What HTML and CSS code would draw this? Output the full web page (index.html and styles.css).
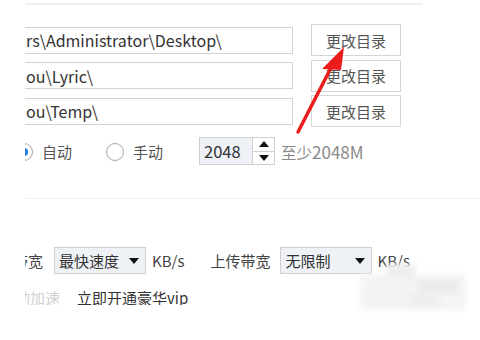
FILE: index.html
```html
<!DOCTYPE html>
<html lang="zh-CN">
<head>
<meta charset="utf-8">
<link rel="stylesheet" href="styles.css">
</head>
<body>
<div class="page">
  <div class="clip">
    <div class="topline"></div>
    <div class="paths">
      <div class="path-input"><span>rs\Administrator\Desktop\</span></div>
      <div class="btn">更改目录</div>
      <div class="path-input"><span>ou\Lyric\</span></div>
      <div class="btn">更改目录</div>
      <div class="path-input"><span>ou\Temp\</span></div>
      <div class="btn">更改目录</div>
    </div>
    <div class="cache-row">
      <span class="radio checked"><span class="dot"></span></span>
      <span class="label">自动</span>
      <span class="radio second"></span>
      <span class="label">手动</span>
      <div class="spin">
        <span class="spin-value">2048</span>
        <span class="spin-btns">
          <span class="spin-up"><i class="tri-up"></i></span>
          <span class="spin-down"><i class="tri-down"></i></span>
        </span>
      </div>
      <span class="hint">至少<span class="num">2048M</span></span>
    </div>
    <div class="sep"></div>
    <div class="bw-row">
      <span class="cut-label">带宽</span>
      <div class="select first"><span>最快速度</span><i class="tri-down"></i></div>
      <span class="unit">KB/s</span>
      <span class="up-label">上传带宽</span>
      <div class="select second"><span>无限制</span><i class="tri-down"></i></div>
      <span class="unit second">KB/s</span>
    </div>
    <div class="vip-row">
      <span class="faded">自动加速</span>
      <span class="vip">立即开通豪华vip</span>
    </div>
  </div>
  <div class="mosaic">
    <i class="m1"></i><i class="m2"></i><i class="m3"></i><i class="m4"></i><i class="m5"></i>
  </div>
  <svg class="arrow" width="480" height="340" viewBox="0 0 480 340">
    <line x1="298" y1="132" x2="334" y2="62" stroke="#ec1c1c" stroke-width="3.5" stroke-linecap="round"/>
    <polygon points="344,47 322,69 341,70" fill="#ec1c1c"/>
  </svg>
</div>
</body>
</html>
```
FILE: styles.css
```css
* { box-sizing: border-box; }
html, body { margin: 0; padding: 0; background: #fff; }
body { font-family: "Noto Sans CJK SC", "Noto Sans", sans-serif; font-size: 15px; color: #333; }
.page { position: relative; width: 480px; height: 340px; overflow: hidden; background: #fff; }
.clip { margin-left: 25px; width: 455px; height: 305px; overflow: hidden; }
.topline { margin-top: 3px; width: 398px; height: 2px; background: #eeeeee; }
.paths { margin-top: 19px; display: grid; grid-template-columns: 288px 90px; grid-auto-rows: 32px; row-gap: 3.5px; column-gap: 18px; margin-left: -20px; }
.path-input { align-self: center; height: 27px; border: 1px solid #d2d2d2; padding-left: 20px; display: flex; align-items: center; color: #333; font-size: 16px; white-space: nowrap; overflow: hidden; }
.btn { border: 1px solid #d6d6d6; display: flex; align-items: center; justify-content: center; color: #555; background: #fff; font-size: 15px; }
.cache-row { margin-top: 10px; height: 28px; display: flex; align-items: center; margin-left: -10px; }
.radio { width: 18px; height: 18px; border: 1.5px solid #a8a8a8; border-radius: 50%; display: flex; align-items: center; justify-content: center; flex: none; margin-top: 2px; }
.radio .dot { width: 8px; height: 8px; border-radius: 50%; background: #1e7fe0; }
.label { margin-left: 9px; color: #555; margin-top: 1px; }
.radio.second { margin-left: 34px; }
.spin { margin-left: 36px; width: 76px; height: 28px; border: 1px solid #cfcfcf; display: flex; flex: none; }
.spin-value { flex: 1; background: #eef2f6; display: flex; align-items: center; padding-left: 4px; color: #333; font-size: 16.5px; }
.spin-btns { width: 22px; border-left: 1px solid #d0d0d0; display: flex; flex-direction: column; background: #fff; }
.spin-up, .spin-down { flex: 1; display: flex; align-items: center; justify-content: center; }
.spin-up { border-bottom: 1px solid #d0d0d0; }
.tri-up { width: 0; height: 0; border-left: 5px solid transparent; border-right: 5px solid transparent; border-bottom: 6px solid #111; }
.tri-down { width: 0; height: 0; border-left: 5px solid transparent; border-right: 5px solid transparent; border-top: 6px solid #111; display: inline-block; }
.hint { margin-left: 6px; color: #8a8a8a; font-size: 15.5px; }
.hint .num { font-size: 17px; }
.sep { margin-top: 33px; height: 1px; background: #f0f0f0; width: 455px; }
.bw-row { margin-top: 48px; height: 27px; display: flex; align-items: center; margin-left: -12px; }
.cut-label { color: #444; width: 30px; text-align: right; flex: none; }
.select { width: 92px; height: 27px; border: 1px solid #cfcfcf; background: #eef2f6; display: flex; align-items: center; justify-content: space-between; padding: 0 6px 0 4px; flex: none; color: #333; }
.select.first { margin-left: 11px; }
.select.second { margin-left: 10px; }
.unit { margin-left: 6px; color: #444; }
.unit.second { margin-left: 5px; }
.up-label { margin-left: 26px; color: #444; }
.vip-row { margin-top: 13px; height: 20px; display: flex; align-items: center; margin-left: -25px; }
.faded { color: #cfcfcf; width: 60px; text-align: right; flex: none; white-space: nowrap; overflow: hidden; direction: rtl; }
.vip { margin-left: 17px; color: #333; }
.mosaic { position: absolute; left: 360px; top: 264px; width: 106px; height: 48px; }
.mosaic i { position: absolute; background: #ececec; filter: blur(2px); }
.mosaic .m1 { left: 0; top: 10px; width: 106px; height: 36px; background: #f5f5f5; }
.mosaic .m2 { left: 26px; top: 0; width: 30px; height: 14px; background: #efefef; }
.mosaic .m3 { left: 58px; top: 16px; width: 40px; height: 14px; background: #ebebeb; }
.mosaic .m4 { left: 10px; top: 18px; width: 40px; height: 22px; background: #f2f2f2; }
.mosaic .m5 { left: 50px; top: 30px; width: 30px; height: 12px; background: #eeeeee; }
.arrow { position: absolute; left: 0; top: 0; pointer-events: none; }
```
